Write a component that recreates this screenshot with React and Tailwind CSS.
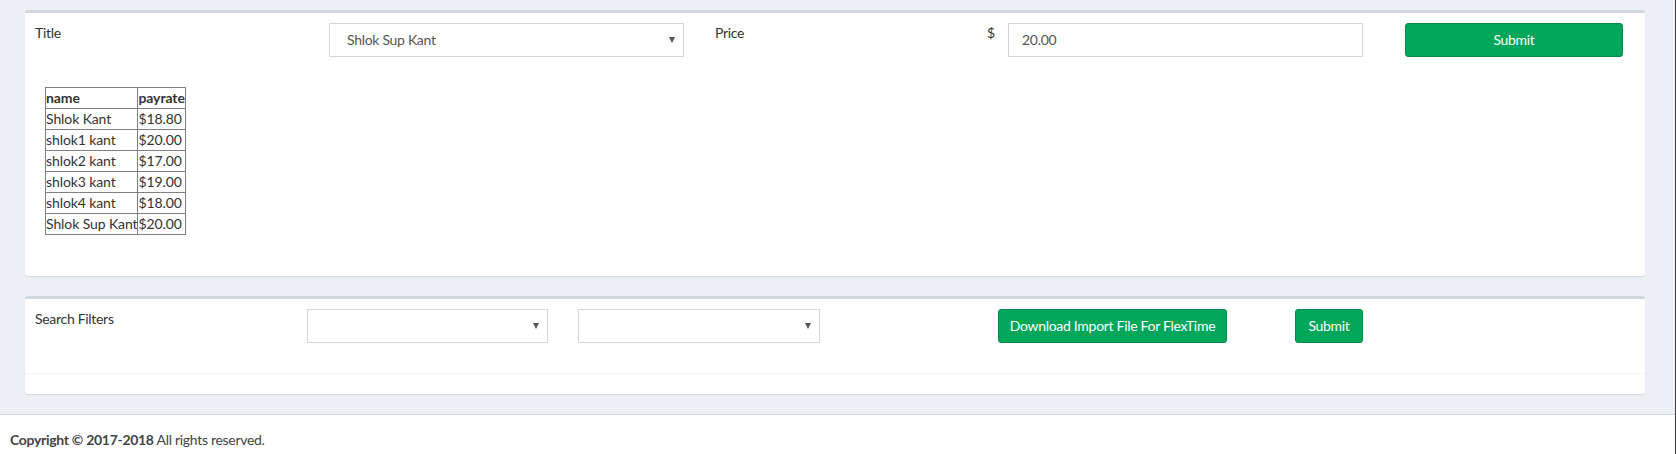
import React from "react";

function Arrow() {
  return (
    <span className="block w-0 h-0 border-l-[3.5px] border-r-[3.5px] border-t-[6px] border-l-transparent border-r-transparent border-t-[#555]" />
  );
}

function FakeSelect({ value, className }) {
  return (
    <div
      className={
        "h-[34px] border border-[#d2d6de] bg-white flex items-center justify-between pl-[17px] pr-[8px] text-[14px] text-[#555] " +
        (className || "")
      }
    >
      <span>{value}</span>
      <Arrow />
    </div>
  );
}

const rows = [
  ["Shlok Kant", "$18.80"],
  ["shlok1 kant", "$20.00"],
  ["shlok2 kant", "$17.00"],
  ["shlok3 kant", "$19.00"],
  ["shlok4 kant", "$18.00"],
  ["Shlok Sup Kant", "$20.00"],
];

export default function App() {
  return (
    <div
      className="w-[1676px] min-h-[454px] bg-[#ecf0f5] border-r border-r-[#3a3a3a] text-[#333] text-[14px] leading-[20px] tracking-[-0.3px]"
      style={{ fontFamily: "Lato, 'Noto Sans', sans-serif" }}
    >
      <div className="pt-[10px] pl-[25px] pr-[30px]">
        {/* Card 1 */}
        <div className="bg-white border-t-[3px] border-t-[#d2d6de] rounded-[3px] shadow-[0_1px_1px_rgba(0,0,0,0.1)] mb-[20px] px-[10px] pt-[10px] pb-[41px]">
          <div className="flex items-start">
            <div className="w-[294px]">Title</div>
            <FakeSelect value="Shlok Sup Kant" className="w-[355px]" />
            <div className="w-[31px]" />
            <div className="w-[272px]">Price</div>
            <div className="w-[21px]">$</div>
            <div className="w-[355px] h-[34px] border border-[#d2d6de] flex items-center pl-[13px] text-[#555]">
              20.00
            </div>
            <div className="w-[42px]" />
            <button className="w-[218px] h-[34px] bg-[#00a65a] text-white rounded-[3px] border border-[#008d4c] text-[14px] tracking-[-0.3px]">
              Submit
            </button>
          </div>
          <table className="ml-[10px] mt-[30px] border-collapse tracking-[-0.1px]">
            <thead>
              <tr>
                <th className="border border-[#808080] text-left font-bold p-0 leading-[20px]">name</th>
                <th className="border border-[#808080] text-left font-bold p-0 leading-[20px]">payrate</th>
              </tr>
            </thead>
            <tbody>
              {rows.map((r) => (
                <tr key={r[0]}>
                  <td className="border border-[#808080] p-0 leading-[20px] whitespace-nowrap">{r[0]}</td>
                  <td className="border border-[#808080] p-0 leading-[20px] whitespace-nowrap">{r[1]}</td>
                </tr>
              ))}
            </tbody>
          </table>
        </div>

        {/* Card 2 */}
        <div className="bg-white border-t-[3px] border-t-[#d2d6de] rounded-[3px] shadow-[0_1px_1px_rgba(0,0,0,0.1)] mb-[20px]">
          <div className="px-[10px] pt-[10px] pb-[30px] flex items-start">
            <div className="w-[272px]">Search Filters</div>
            <FakeSelect value="" className="w-[241px]" />
            <div className="w-[30px]" />
            <FakeSelect value="" className="w-[242px]" />
            <div className="w-[178px]" />
            <button className="w-[229px] h-[34px] bg-[#00a65a] text-white rounded-[3px] border border-[#008d4c] text-[14px] tracking-[-0.3px]">
              Download Import File For FlexTime
            </button>
            <div className="w-[68px]" />
            <button className="w-[68px] h-[34px] bg-[#00a65a] text-white rounded-[3px] border border-[#008d4c] text-[14px] tracking-[-0.3px]">
              Submit
            </button>
          </div>
          <div className="border-t border-t-[#f4f4f4] h-[21px]" />
        </div>
      </div>

      <footer className="bg-white border-t border-t-[#d2d6de] px-[10px] py-[15px] text-[#444]">
        <strong className="font-bold">Copyright © 2017-2018</strong> All rights reserved.
      </footer>
    </div>
  );
}
